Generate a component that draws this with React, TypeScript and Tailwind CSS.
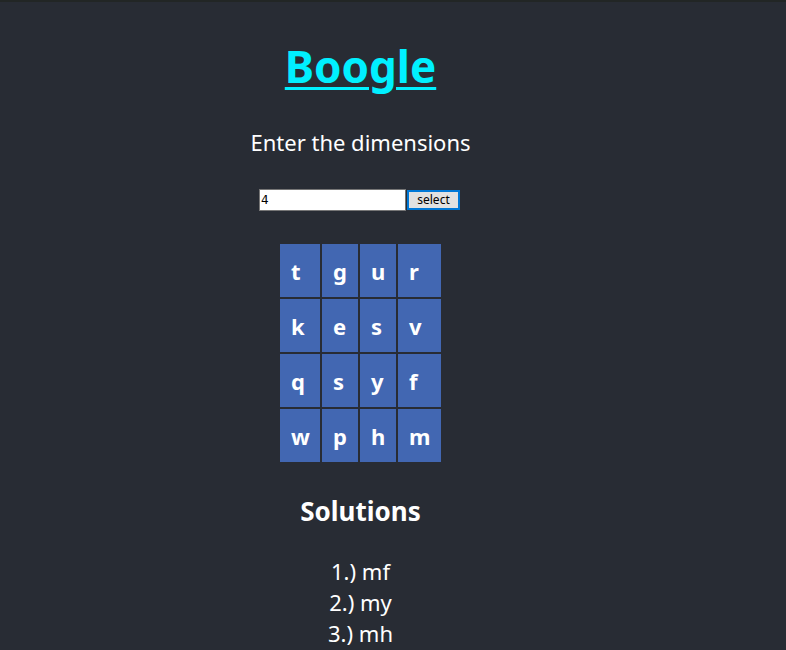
const board = [
  ["t", "g", "u", "r"],
  ["k", "e", "s", "v"],
  ["q", "s", "y", "f"],
  ["w", "p", "h", "m"],
];

const words = ["mf", "my", "mh"];

export default function App() {
  return (
    <div className="min-h-screen border-t-2 border-[#222625] bg-[#282c34] pr-[65px] text-center font-['Noto_Sans',sans-serif] text-[22px] leading-[31px] text-white">
      <main className="flex flex-col items-center pt-[35px]">
        <h1 className="text-[44px] leading-[58px] font-bold text-[#00f0ff] underline decoration-3 underline-offset-4">Boogle</h1>
        <form className="flex flex-col items-center" onSubmit={(e) => e.preventDefault()}>
          <label htmlFor="dimensions" className="mt-8">Enter the dimensions</label>
          <div className="mt-[31px] mr-0.5 flex items-center gap-px">
            <input id="dimensions" defaultValue="4" className="h-[22px] w-[147px] border border-[#767676] bg-white px-px font-['DejaVu_Sans',sans-serif] text-xs leading-4 text-black" />
            <button className="h-5 w-[53px] border-2 border-[#0078d7] bg-[#e1e1e1] font-['Noto_Sans',sans-serif] text-xs leading-4 text-black">select</button>
          </div>
        </form>
        <table className="mt-[31px] border-separate border-spacing-0.5 text-left font-bold">
          <tbody>
            {board.map((row, i) => (
              <tr key={i}>
                {row.map((letter, j) => (
                  <td key={j} className="h-[53px] w-9 bg-[#4267b2] pt-0.5 pl-[11px] first:w-10 last:w-[43px]">{letter}</td>
                ))}
              </tr>
            ))}
          </tbody>
        </table>
        <h2 className="mt-[30px] text-[26px] leading-[34px] font-bold">Solutions</h2>
        <ol className="mt-7">
          {words.map((word, i) => (
            <li key={word}>{i + 1}.) {word}</li>
          ))}
        </ol>
      </main>
    </div>
  );
}
